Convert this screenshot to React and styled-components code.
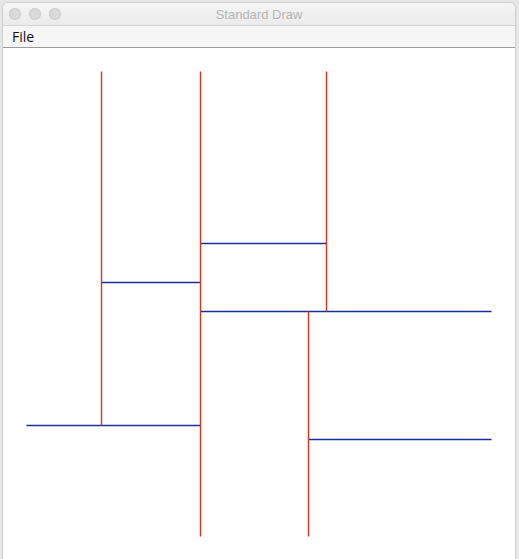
import styled, { createGlobalStyle } from 'styled-components'

const Global = createGlobalStyle`
  html, body {
    margin: 0;
    padding: 0;
    background: #ffffff;
  }
  body {
    font-family: "Liberation Sans", Arial, sans-serif;
  }
`

const Page = styled.div`
  width: 519px;
  height: 559px;
  background: #e6e6e6;
  padding: 3px 4px 0 3px;
  box-sizing: border-box;
`

const Window = styled.div`
  width: 512px;
  height: 556px;
  display: flex;
  flex-direction: column;
  background: #ffffff;
  border-radius: 5px 5px 0 0;
  box-shadow: 0 0 0 1px #cfcfcf;
  overflow: hidden;
`

const TitleBar = styled.div`
  height: 22px;
  flex: none;
  position: relative;
  display: flex;
  align-items: center;
  justify-content: center;
  background: linear-gradient(#f5f5f5, #ebebeb);
  border-bottom: 1px solid #d4d4d4;
  font-size: 13px;
  color: #b3b3b3;
`

const Lights = styled.div`
  position: absolute;
  left: 6px;
  top: 5px;
  display: flex;
  gap: 8px;
`

const Light = styled.span`
  width: 12px;
  height: 12px;
  border-radius: 50%;
  background: #dadada;
  box-shadow: inset 0 0 0 1px #cdcdcd;
`

const MenuBar = styled.div`
  height: 21px;
  flex: none;
  display: flex;
  align-items: center;
  padding-left: 9px;
  background: #f6f6f6;
  border-bottom: 1px solid #9a9a9a;
  font-family: "Open Sans", "Liberation Sans", sans-serif;
  font-size: 14px;
  color: #111;
`

const Canvas = styled.svg`
  display: block;
  flex: none;
  width: 512px;
  height: 511px;
`

const ox = 3
const oy = 48

const reds = [
  [101, 71, 101, 425],
  [200, 71, 200, 536],
  [326, 71, 326, 311],
  [308, 311, 308, 536],
]

const blues = [
  [101, 282, 200, 282],
  [200, 243, 326, 243],
  [200, 311, 491, 311],
  [26, 425, 200, 425],
  [308, 439, 491, 439],
]

const Segment = ({ l, color }) => (
  <line
    x1={l[0] - ox + 0.5}
    y1={l[1] - oy + 0.5}
    x2={l[2] - ox + 0.5}
    y2={l[3] - oy + 0.5}
    stroke={color}
    strokeWidth="1.4"
  />
)

export default function App() {
  return (
    <Page>
      <Global />
      <Window>
        <TitleBar>
          <Lights>
            <Light />
            <Light />
            <Light />
          </Lights>
          Standard Draw
        </TitleBar>
        <MenuBar>File</MenuBar>
        <Canvas width="512" height="511" viewBox="0 0 512 511">
          {blues.map((l, i) => <Segment key={'b' + i} l={l} color="#1a2f9c" />)}
          {reds.map((l, i) => <Segment key={'r' + i} l={l} color="#d8331c" />)}
        </Canvas>
      </Window>
    </Page>
  )
}
